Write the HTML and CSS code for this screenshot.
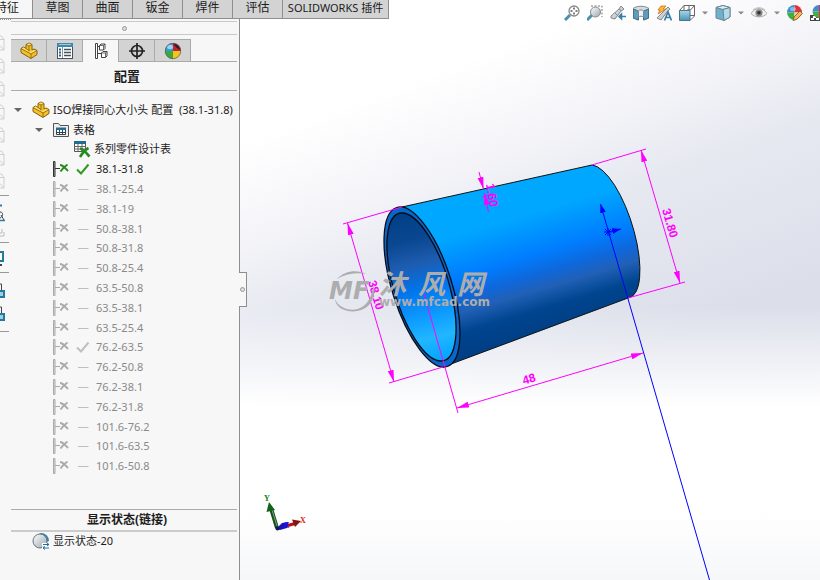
FILE: index.html
```html
<!DOCTYPE html>
<html lang="zh-CN">
<head>
<meta charset="utf-8">
<title>SOLIDWORKS</title>
<link rel="stylesheet" href="styles.css">
</head>
<body>
<svg class="defs" aria-hidden="true">
  <defs>
    <linearGradient id="glass" x1="0" y1="0" x2="1" y2="1"><stop offset="0" stop-color="#fff"/><stop offset="1" stop-color="#9aa7b0"/></linearGradient>
    <linearGradient id="blue" x1="0" y1="0" x2="0" y2="1"><stop offset="0" stop-color="#a9d6e8"/><stop offset="1" stop-color="#4a95b8"/></linearGradient>
    <symbol id="i-part" viewBox="0 0 18 18">
      <path d="M6 2.500 9 1l3 1.500V8l2-1 3 1.500v4L11 16.500 1 10.500V6.500L3.500 5 6 6.500z" fill="#f3bf2a" stroke="#86600f" stroke-linejoin="round"/>
      <path d="M6.500 2.500 9 1.500l2.500 1L9 4zM1.500 6.500l2-1 4 2.500 3 2 3.500-2 2.500 1L11 11.500z" fill="#ffe36d"/>
      <path d="M9 4v5.500M6 2.500 9 4l3-1.500M6 6.500 9 8.500M11 16v-4l6-3.500M11 12 1 6.500" fill="none" stroke="#86600f" stroke-width=".8"/>
    </symbol>
    <symbol id="i-props" viewBox="0 0 18 18">
      <rect x="1.500" y="1.500" width="15" height="15" fill="#fff" stroke="#45525a"/>
      <path d="M1 1h16v4H1z" fill="#3e88ad"/><path d="M3 2.500h12" stroke="#9ccbe0"/>
      <path d="M6.500 5v11" stroke="#8b989f"/>
      <path d="M3 7.500h2M3 10.500h2M3 13.500h2" stroke="#1e6286" stroke-width="2"/>
      <path d="M8 7.500h7M8 10.500h7M8 13.500h7" stroke="#45525a" stroke-width="1.500"/>
    </symbol>
    <symbol id="i-config" viewBox="0 0 18 18">
      <path d="M3.500 1.500h2v15h-2zM5.500 4.500h3M5.500 11.500h4" fill="#fff" stroke="#444"/>
      <path d="M7.500 3.500 9 2h4v4.500L11.500 8h-4zM9.500 11 11 9.500h4V14l-1.500 1.500h-4z" fill="#fff" stroke="#444"/>
      <path d="M7.500 3.500h4V8M11.500 3.500 13 2M9.500 11h4v4.500M13.500 11 15 9.500" fill="none" stroke="#444" stroke-width=".8"/>
    </symbol>
    <symbol id="i-target" viewBox="0 0 18 18">
      <circle cx="9" cy="9" r="5.500" fill="none" stroke="#222" stroke-width="1.700"/>
      <path d="M9 1v16M1 9h16" stroke="#222" stroke-width="1.700"/>
    </symbol>
    <symbol id="i-ball" viewBox="0 0 18 18">
      <path d="M9 9V1A8 8 0 0 0 1 9z" fill="#2f9be0"/><path d="M9 9h8A8 8 0 0 0 9 1z" fill="#c8232c"/>
      <path d="M9 9H1a8 8 0 0 0 8 8z" fill="#3fa83a"/><path d="M9 9v8a8 8 0 0 0 8-8z" fill="#f4c51e"/>
      <path d="M9.500 2c4 0 6 3 7 6-3-1-5-3-7-6z" fill="#222"/>
      <ellipse cx="6" cy="5" rx="3" ry="2.200" fill="#fff" opacity=".55"/>
      <circle cx="9" cy="9" r="7.700" fill="none" stroke="#555" stroke-width=".7"/>
    </symbol>
    <symbol id="i-folder" viewBox="0 0 18 18">
      <path d="M1.500 15.500v-13h5l1.500 2h8.500v11z" fill="#eee" stroke="#555"/>
      <path d="M4.500 7.500h9v6h-9z" fill="#fff" stroke="#345"/><path d="M4 6.500h10V9H4z" fill="#246b90"/>
      <path d="M4 11.500h10M7.500 9v5M10.500 9v5" stroke="#345"/>
    </symbol>
    <symbol id="i-table" viewBox="0 0 18 18">
      <path d="M1.500 1.500h11v10h-11z" fill="#fff" stroke="#555"/><path d="M1 1h12v3H1z" fill="#246b90"/>
      <path d="M1 6.500h12M1 9h12M5 4v8M9 4v8" stroke="#666"/>
      <path d="M7 8.500c4 1 6 4 9.500 8M15.500 8c-4 2-6 5-8.500 9" stroke="#258a20" stroke-width="2.700" fill="none"/>
    </symbol>
    <symbol id="i-node" viewBox="0 0 18 18">
      <path class="stem" d="M1.500 1.500h1.500v15H1.500z"/><path class="stem" d="M3 8.500h5"/>
      <path class="cross" d="M8 5c3 0 5 3 8 6M15.500 4.500C13 6 11 8 8.500 11.500"/>
    </symbol>
    <symbol id="i-check" viewBox="0 0 14 14"><path class="mark" d="M1 7.500 5 11.500 12.500 2.500"/></symbol>
    <symbol id="i-dash" viewBox="0 0 14 14"><path class="mark dash" d="M2 7.500h10.500"/></symbol>
    <symbol id="i-caret" viewBox="0 0 8 6"><path d="M0 1h8L4 5z" fill="currentColor"/></symbol>
    <symbol id="i-state" viewBox="0 0 18 18">
      <path d="M9 1a8 8 0 0 1 8 8l-3 1V6L7 2z" fill="#3483aa"/>
      <circle cx="8" cy="9" r="7" fill="url(#glass)" stroke="#65727a"/>
      <path d="M10 12.500h7M10 16h7" stroke="#fff" stroke-width="3"/>
      <path d="M11 12.500h6M15 11l2 1.500-2 1.500M17 16h-6M13 14.500 11 16l2 1.500" fill="none" stroke="#246f98"/>
    </symbol>
    <symbol id="i-cube" viewBox="0 0 5 16"><path d="M0 1h1.500L4 4.500V15H0M0 10.500 4 15M0 4.500h4" fill="none" stroke="#cfcfcf"/></symbol>
    <symbol id="i-zoomfit" viewBox="0 0 16 16">
      <path d="M1 15 6 10" stroke="#4c8eae" stroke-width="3"/><circle cx="10" cy="6" r="5" fill="#fff" stroke="#888" stroke-width="1.300"/>
      <path d="M10 2.500v2M10 7.500v2M6.500 6h2M11.500 6h2" stroke="#555" stroke-width="1.500"/>
    </symbol>
    <symbol id="i-zoomarea" viewBox="0 0 16 16">
      <path d="M4 1h11v11" fill="none" stroke="#777" stroke-dasharray="2 1.500"/>
      <path d="M0 15 5 10" stroke="#4c8eae" stroke-width="3"/><circle cx="8.500" cy="7" r="5" fill="url(#glass)" stroke="#888"/>
    </symbol>
    <symbol id="i-prev" viewBox="0 0 16 16">
      <path d="M1 11 9 4l2-3 3 3-3 2-6 8-4-1z" fill="url(#glass)" stroke="#888"/><path d="M5 8l3 3M9 4l3 2" stroke="#888"/>
      <path d="M16 11.500h-5M11.500 9 9 11.500l2.500 2.500z" stroke="#3682a8" stroke-width="1.500" fill="#3682a8"/>
    </symbol>
    <symbol id="i-section" viewBox="0 0 16 16">
      <path d="M0 3.500c4-3 12-3 16 0V13l-5 2V7H5v8l-5-2z" fill="#d6dde0" stroke="#7d8a91"/>
      <path d="M.500 4 5.500 6v9L.500 13zM10.500 6l5-2v9l-5 2z" fill="#5a9dbd" stroke="#48707f"/>
      <path d="M5.500 6c1-1.500 4-1.500 5 0v6c-1-1-4-1-5 0z" fill="#eef2f4" stroke="#7d8a91"/>
    </symbol>
    <symbol id="i-annot" viewBox="0 0 16 16">
      <path d="M1 13 9 5l3-3 2 2-3 3-6 8z" fill="url(#glass)" stroke="#888"/>
      <path d="M5 1h5L7 4h3L2 9l2-4H2z" fill="#f6b93a" stroke="#cf7420" stroke-width=".8"/>
      <path d="M8.500 15.500 12 7l3.500 8.500M9.500 12.500h5" fill="none" stroke="#357fa6" stroke-width="1.700"/>
    </symbol>
    <symbol id="i-orient" viewBox="0 0 16 16">
      <path d="M.500 5.500 5 .500h10.500V11L11 15.500M5 .500v5M11 5.500 15.500 .500M11 10.500h4.500M10 1v4M8.500 4 10 5.500 11.500 4" fill="#fff" stroke="#666"/>
      <path d="M.500 5.500H11v10H.500z" fill="url(#blue)" stroke="#4d7386"/>
    </symbol>
    <symbol id="i-shaded" viewBox="0 0 16 16">
      <path d="M1 2.500 8 .500l7 2V12l-6 3.500L1 13z" fill="#6eb0cd" stroke="#6a858f"/>
      <path d="M1 2.500 8 4.500l7-2-7-2z" fill="#dceef5" stroke="#6a858f"/><path d="M8 4.500 15 2.500V12l-6 3.500z" fill="#b4dbea" stroke="#6a858f"/>
    </symbol>
    <symbol id="i-eye" viewBox="0 0 16 16">
      <path d="M0 8.500C4 2 12 2 16 8.500 12 13 4 13 0 8.500z" fill="#f2f2f2" stroke="#aaa"/>
      <circle cx="8" cy="7.800" r="3.600" fill="#888"/><circle cx="8" cy="7.800" r="1.800" fill="#333"/><path d="M2 5c3-3 9-3 12 0" fill="none" stroke="#bbb"/>
    </symbol>
    <symbol id="i-edit" viewBox="0 0 16 16">
      <path d="M7.500 7.500V0A7.500 7.500 0 0 0 0 7.500z" fill="#3b8ed0"/><path d="M7.500 7.500H15A7.500 7.500 0 0 0 7.500 0z" fill="#e0323c"/>
      <path d="M7.500 7.500H0a7.500 7.500 0 0 0 7.500 7.500z" fill="#42ad46"/><path d="M7.500 7.500V15A7.500 7.500 0 0 0 15 7.500z" fill="#e8d7a0"/>
      <ellipse cx="6" cy="4" rx="3" ry="2" fill="#fff" opacity=".4"/>
      <path d="M6 15.500 7 12l6-6 2.500 2.500-6 6z" fill="#f0b95a" stroke="#70502a" stroke-width=".8"/>
    </symbol>
    <symbol id="i-scene" viewBox="0 0 16 16">
      <path d="M0 10h16v6H0z" fill="#444"/><path d="M1 13h3v2H1zM6 13h3v2H6zM3 11h3v2H3z" fill="#fff"/>
      <path d="M9 6.500V0a6.500 6.500 0 0 0-6.500 6.500z" fill="#3b8ed0"/><path d="M9 6.500H2.500A6.500 6.500 0 0 0 9 13z" fill="#42ad46"/><path d="M9 0a6.500 6.500 0 0 1 0 13z" fill="#e0323c"/>
    </symbol>
  </defs>
</svg>

<div class="app">
  <header class="ribbon">
    <nav class="tabs">
      <button class="tab tab-first active">特征</button>
      <button class="tab">草图</button>
      <button class="tab">曲面</button>
      <button class="tab">钣金</button>
      <button class="tab">焊件</button>
      <button class="tab">评估</button>
      <button class="tab tab-wide">SOLIDWORKS 插件</button>
    </nav>
    <div class="view-tools">
      <button aria-label="整屏显示"><svg><use href="#i-zoomfit"/></svg></button>
      <button aria-label="局部放大"><svg><use href="#i-zoomarea"/></svg></button>
      <button aria-label="上一视图"><svg><use href="#i-prev"/></svg></button>
      <button aria-label="剖面视图"><svg><use href="#i-section"/></svg></button>
      <button aria-label="动态注解视图"><svg><use href="#i-annot"/></svg></button>
      <button aria-label="视图定向"><svg><use href="#i-orient"/></svg></button>
      <button class="drop" aria-label="更多视图定向"><svg><use href="#i-caret"/></svg></button>
      <button aria-label="显示样式"><svg><use href="#i-shaded"/></svg></button>
      <button class="drop" aria-label="更多显示样式"><svg><use href="#i-caret"/></svg></button>
      <button aria-label="隐藏或显示"><svg><use href="#i-eye"/></svg></button>
      <button class="drop" aria-label="更多隐藏选项"><svg><use href="#i-caret"/></svg></button>
      <button aria-label="编辑外观"><svg><use href="#i-edit"/></svg></button>
      <button aria-label="应用布景"><svg><use href="#i-scene"/></svg></button>
    </div>
  </header>

  <aside class="side">
    <div class="strip">
      <div class="group faint">
        <svg><use href="#i-cube"/></svg><svg><use href="#i-cube"/></svg><svg><use href="#i-cube"/></svg><svg><use href="#i-cube"/></svg><svg><use href="#i-cube"/></svg><svg><use href="#i-cube"/></svg><svg><use href="#i-cube"/></svg>
      </div>
      <div class="group">
        <svg viewBox="0 0 5 46"><path d="M0 9.500h2" stroke="#2d7fa8" stroke-width="2"/><path d="M0 16c4 0 3 5 0 6M1 19l3 5" stroke="#444" fill="none"/><path d="M0 24.500h5" stroke="#2d7fa8" stroke-width="1.500"/><path d="M2 33v4H0M4 36v4H0" stroke="#bbb" fill="none"/></svg>
      </div>
      <div class="group">
        <svg viewBox="0 0 5 29"><path d="M0 9h3v9H0" stroke="#25799f" stroke-width="2" fill="#fff"/><path d="M0 22h2" stroke="#444" stroke-width="2"/></svg>
      </div>
      <div class="group">
        <svg viewBox="0 0 5 58"><path d="M0 11h1.500v7M0 34h1.500v7" stroke="#444" fill="none"/><path d="M0 18h4v6H0M0 41h4v6H0" stroke="#25799f" stroke-width="2" fill="#9fcde0"/></svg>
      </div>
    </div>

    <div class="manager">
      <div class="grip"><i></i></div>
      <nav class="manager-tabs">
        <button aria-label="特征树"><svg><use href="#i-part"/></svg></button>
        <button aria-label="属性"><svg><use href="#i-props"/></svg></button>
        <button class="active" aria-label="配置"><svg><use href="#i-config"/></svg></button>
        <button aria-label="尺寸专家"><svg><use href="#i-target"/></svg></button>
        <button aria-label="外观"><svg><use href="#i-ball"/></svg></button>
      </nav>
      <h2 class="heading">配置</h2>
      <ul class="tree">
        <li class="root"><svg class="caret"><use href="#i-caret"/></svg><svg class="icon"><use href="#i-part"/></svg><span>ISO焊接同心大小头 配置&nbsp; (38.1-31.8)</span></li>
        <li class="branch"><svg class="caret"><use href="#i-caret"/></svg><svg class="icon"><use href="#i-folder"/></svg><span>表格</span></li>
        <li class="leaf"><svg class="icon"><use href="#i-table"/></svg><span>系列零件设计表</span></li>
        <li class="config current"><svg class="icon"><use href="#i-node"/></svg><svg class="status"><use href="#i-check"/></svg><span>38.1-31.8</span></li>
        <li class="config"><svg class="icon"><use href="#i-node"/></svg><svg class="status"><use href="#i-dash"/></svg><span>38.1-25.4</span></li>
        <li class="config"><svg class="icon"><use href="#i-node"/></svg><svg class="status"><use href="#i-dash"/></svg><span>38.1-19</span></li>
        <li class="config"><svg class="icon"><use href="#i-node"/></svg><svg class="status"><use href="#i-dash"/></svg><span>50.8-38.1</span></li>
        <li class="config"><svg class="icon"><use href="#i-node"/></svg><svg class="status"><use href="#i-dash"/></svg><span>50.8-31.8</span></li>
        <li class="config"><svg class="icon"><use href="#i-node"/></svg><svg class="status"><use href="#i-dash"/></svg><span>50.8-25.4</span></li>
        <li class="config"><svg class="icon"><use href="#i-node"/></svg><svg class="status"><use href="#i-dash"/></svg><span>63.5-50.8</span></li>
        <li class="config"><svg class="icon"><use href="#i-node"/></svg><svg class="status"><use href="#i-dash"/></svg><span>63.5-38.1</span></li>
        <li class="config"><svg class="icon"><use href="#i-node"/></svg><svg class="status"><use href="#i-dash"/></svg><span>63.5-25.4</span></li>
        <li class="config"><svg class="icon"><use href="#i-node"/></svg><svg class="status"><use href="#i-check"/></svg><span>76.2-63.5</span></li>
        <li class="config"><svg class="icon"><use href="#i-node"/></svg><svg class="status"><use href="#i-dash"/></svg><span>76.2-50.8</span></li>
        <li class="config"><svg class="icon"><use href="#i-node"/></svg><svg class="status"><use href="#i-dash"/></svg><span>76.2-38.1</span></li>
        <li class="config"><svg class="icon"><use href="#i-node"/></svg><svg class="status"><use href="#i-dash"/></svg><span>76.2-31.8</span></li>
        <li class="config"><svg class="icon"><use href="#i-node"/></svg><svg class="status"><use href="#i-dash"/></svg><span>101.6-76.2</span></li>
        <li class="config"><svg class="icon"><use href="#i-node"/></svg><svg class="status"><use href="#i-dash"/></svg><span>101.6-63.5</span></li>
        <li class="config"><svg class="icon"><use href="#i-node"/></svg><svg class="status"><use href="#i-dash"/></svg><span>101.6-50.8</span></li>
      </ul>
      <section class="states">
        <h2>显示状态(链接)</h2>
        <p><svg class="icon"><use href="#i-state"/></svg><span>显示状态-20</span></p>
      </section>
    </div>
    <button class="flyout" aria-label="折叠面板"><i></i></button>
  </aside>

  <main class="viewport">
    <svg class="model" viewBox="240 0 580 580" preserveAspectRatio="xMinYMin meet">
      <defs>
        <linearGradient id="body" gradientUnits="userSpaceOnUse" x1="497" y1="186" x2="540" y2="332">
          <stop offset="0" stop-color="#00a8ff"/><stop offset=".24" stop-color="#00a6ff"/><stop offset=".5" stop-color="#007dff"/>
          <stop offset=".63" stop-color="#0e68dc"/><stop offset=".73" stop-color="#2160b6"/><stop offset=".86" stop-color="#00458f"/><stop offset="1" stop-color="#003f86"/>
        </linearGradient>
        <linearGradient id="bore" gradientUnits="userSpaceOnUse" x1="404" y1="213" x2="440" y2="361">
          <stop offset="0" stop-color="#003f86"/><stop offset=".18" stop-color="#0a4790"/><stop offset=".34" stop-color="#1d5cb0"/>
          <stop offset=".52" stop-color="#0076f0"/><stop offset=".72" stop-color="#10a0ff"/><stop offset=".84" stop-color="#22b6ff"/><stop offset="1" stop-color="#00a6ff"/>
        </linearGradient>
        <marker id="dim" viewBox="0 0 12 6" refX="12" refY="3" markerWidth="12" markerHeight="6" markerUnits="userSpaceOnUse" orient="auto-start-reverse"><path d="M0 0 12 3 0 6z"/></marker>
        <marker id="axis" viewBox="0 0 9 6" refX="9" refY="3" markerWidth="9" markerHeight="6" markerUnits="userSpaceOnUse" orient="auto-start-reverse"><path d="M0 0 9 3 0 6z"/></marker>
      </defs>
      <path d="M402 207 592 165A69.300 24.200 72.700 0 1 628 298L443 367 422 287Z" fill="url(#body)" stroke="#111"/>
      <ellipse cx="422" cy="287" rx="83.400" ry="29.800" transform="rotate(72.400 422 287)" fill="#0768cc" stroke="#0a0a14" stroke-width="1.300"/>
      <path d="M402 213A76.900 27.400 73 0 1 441 361 76.900 27.400 73 0 1 402 213Z" fill="url(#bore)" stroke="#0a0a14" stroke-width="1.300"/>
      <g class="dimension">
        <path d="M343 224 402 207M389 383 443 367M424 294 458 413M592 165 646 149M628 298 685 282M482 197 492 194"/>
        <path class="arrows" d="M347.500 223 394 382"/>
        <path class="arrows" d="M457 408 643 353"/>
        <path class="arrows" d="M641 150 680 283"/>
        <path class="arrow" d="M479 172 483.500 189"/>
        <path class="arrow" d="M488.500 212 484.500 193"/>
        <text transform="translate(376 295) rotate(74)" y="4">38.10</text>
        <text transform="translate(529 379) rotate(-16)" y="4">48</text>
        <text transform="translate(670 223) rotate(74)" y="4">31.80</text>
        <text transform="translate(492 195) rotate(80)" y="4">1.60</text>
      </g>
      <g class="axis">
        <path d="M709.500 580 600.500 204"/>
        <path d="M608 232 621 229"/>
        <path class="origin" d="M604 232h8M608 228v8M605 229l6 6M611 229l-6 6"/>
      </g>
      <g class="triad">
        <path d="M277 528 271.500 510" stroke="#174f1c" stroke-width="4"/><path d="M277 526 272 510" stroke="#75a678"/><path d="M269 502 266.500 512 275 510z" fill="#126318"/>
        <path d="M286 526 295 523.500" stroke="#b80d12" stroke-width="3"/><path d="M301 521 292 519.500 295 527z" fill="#891217"/>
        <path d="M276 529 282 523 288 522 287 528 280 530z" fill="#1717b8"/><circle cx="277.500" cy="528.500" r="2" fill="#17174a"/>
        <text x="264" y="501" fill="#128018">Y</text><text x="284" y="528" fill="#11f">Z</text><text x="300" y="523" fill="#e02020">X</text>
      </g>
      <g class="watermark">
        <path d="M337 279C344 271 357 269 366 274 354 272 346 274 337 279zM335 299c5 13 29 17 36-4l3-10c5 33-38 32-39 14z"/>
        <text class="mark-logo" x="329" y="299">MF</text>
        <text class="mark-name" x="379 418 457" y="294">沐风网</text>
        <text class="mark-url" x="379" y="306">www.mfcad.com</text>
      </g>
    </svg>
  </main>
</div>
</body>
</html>
```
FILE: styles.css
```css
* { box-sizing: border-box; }

body {
  margin: 0;
  background: #f7f7f7;
  color: #1c1c1c;
  font: 11px/16px "Noto Sans", "Noto Sans CJK SC", sans-serif;
}

button {
  margin: 0;
  padding: 0;
  border: 0;
  background: none;
  color: inherit;
  font: inherit;
}

svg { display: block; }
.defs { position: absolute; width: 0; height: 0; }

.app {
  display: grid;
  grid-template: 19px 1fr / 240px 1fr;
  min-height: 100vh;
  overflow: hidden;
}

/* Ribbon and view toolbar */
.ribbon {
  grid-area: 1 / 1 / 2 / 3;
  z-index: 1;
  display: flex;
  justify-content: space-between;
  min-width: 0;
}
.tabs { display: flex; }
.tab {
  width: 50px;
  height: 19px;
  padding-bottom: 3px;
  border-right: 1px solid #8e8e8e;
  border-bottom: 1px solid #8e8e8e;
  background: #d3d3d3;
  font-size: 12px;
  line-height: 15px;
  white-space: nowrap;
}
.tab-first {
  display: flex;
  justify-content: flex-end;
  width: 33px;
  padding-right: 13px;
}
.tab.active { background: #f7f7f7; }
.tab-wide { width: 106px; font-size: 11px; }
.view-tools {
  display: flex;
  align-items: center;
  gap: 7px;
  height: 25px;
  margin-right: -6px;
}
.view-tools svg { width: 16px; height: 16px; }
.view-tools .drop svg { width: 6px; height: 6px; color: #888; }

/* Left side */
.side {
  grid-area: 2 / 1;
  position: relative;
  display: grid;
  grid-template-columns: 11px 1fr;
  border-right: 1px solid #8e8e8e;
  background: #f7f7f7;
}
.strip {
  padding-top: 2px;
  border-top: 1px dotted #999;
}
.group {
  width: 9px;
  border-bottom: 1px solid #999;
}
.group svg { width: 5px; }
.group.faint {
  display: grid;
  gap: 7px;
  padding: 13px 0 6px;
}
.group.faint svg { height: 16px; }

.manager {
  display: flex;
  flex-direction: column;
  padding: 2px 2px 0 0;
}
.grip {
  display: grid;
  place-items: center;
  height: 14px;
  border-top: 1px solid #c8c8c8;
  border-bottom: 1px solid #c8c8c8;
}
.grip i,
.flyout i {
  width: 5px;
  height: 5px;
  border: 1px solid #999;
  border-radius: 50%;
  background: #ddd;
}
.manager-tabs {
  display: flex;
  margin-top: 4px;
  border-bottom: 1px solid #aaa;
}
.manager-tabs button {
  display: grid;
  place-items: center;
  width: 36px;
  height: 22px;
  border-top: 1px solid #aaa;
  border-right: 1px solid #aaa;
  background: #d3d3d3;
}
.manager-tabs .active {
  height: 23px;
  margin-bottom: -1px;
  background: #f7f7f7;
}
.manager-tabs svg,
.icon { width: 18px; height: 18px; }

h2 {
  margin: 0;
  padding-left: 6px;
  font-size: 12px;
  font-weight: 700;
  line-height: 20px;
  text-align: center;
}
.heading {
  padding: 4px 0 4px 6px;
  border-bottom: 1px solid #aaa;
  font-size: 13px;
}

.tree {
  display: grid;
  grid-auto-rows: 1fr;
  min-height: 376px;
  margin: 9px -4px 0 0;
  padding: 0;
  list-style: none;
  white-space: nowrap;
}
.tree li {
  display: flex;
  align-items: center;
  gap: 3px;
}
.caret { width: 8px; height: 6px; color: #666; }
.root { padding-left: 3px; }
.root .icon { margin-left: 7px; }
.branch { padding-left: 24px; }
.branch .icon { margin-left: 6px; }
.tree .leaf { padding-left: 62px; }
.tree .config { gap: 6px; padding-left: 41px; color: #8a8a8a; }
.status { width: 14px; height: 14px; }

/* Marks take their colours from the row that uses them */
.stem { fill: var(--stem-fill, #ddd); stroke: var(--stem, #aaa); }
.cross { fill: none; stroke: var(--cross, #aaa); stroke-width: 2px; }
.mark { fill: none; stroke: var(--mark, #bfbfbf); stroke-width: 2px; }
.mark.dash { stroke-width: 1px; }
.tree .current {
  --stem-fill: #aaa;
  --stem: #333;
  --cross: #238a1c;
  --mark: #2f9a1c;
  color: #1c1c1c;
}

.states {
  margin-top: 33px;
  border-top: 1px solid #aaa;
}
.states h2 { border-bottom: 2px solid #ccc; }
.states p {
  display: flex;
  align-items: center;
  gap: 3px;
  margin: 0;
  padding-left: 21px;
}

.flyout {
  position: absolute;
  top: 253px;
  right: -8px;
  z-index: 2;
  display: grid;
  place-items: center;
  width: 8px;
  height: 35px;
  border: 1px solid #8e8e8e;
  border-left: 0;
  background: #f7f7f7;
}

/* Graphics area */
.viewport {
  grid-area: 1 / 2 / 3 / 3;
  background:
    linear-gradient(180deg, rgba(255, 255, 255, 0) 53%, #fff 70%, #fff 88%, #f6f7f9 100%),
    linear-gradient(160deg, #fff 18%, #f5f5f9 30%, #e7e9f1 41%, #dcdfea 62%);
}
.model { width: 100%; height: 100%; }

.dimension path { fill: none; stroke: #f0f; }
.dimension .arrow { marker-end: url(#dim); }
.dimension .arrows { marker-start: url(#dim); marker-end: url(#dim); }
#dim path { fill: #f0f; }
.dimension text {
  fill: #f0f;
  font: 700 12px "Liberation Sans Narrow", "Liberation Sans", sans-serif;
  text-anchor: middle;
}
.axis path { fill: none; stroke: #00f; marker-end: url(#axis); }
.axis .origin { marker-end: none; }
#axis path { fill: #00f; }
.triad text { font: 700 8px "Liberation Serif", serif; }
.watermark { fill: #adadad; }
.mark-logo { font: italic 700 24px "DejaVu Sans", sans-serif; }
.mark-name { font: italic 700 27px "Noto Sans CJK SC", sans-serif; }
.mark-url { font: 700 12px "DejaVu Sans", sans-serif; }
```
